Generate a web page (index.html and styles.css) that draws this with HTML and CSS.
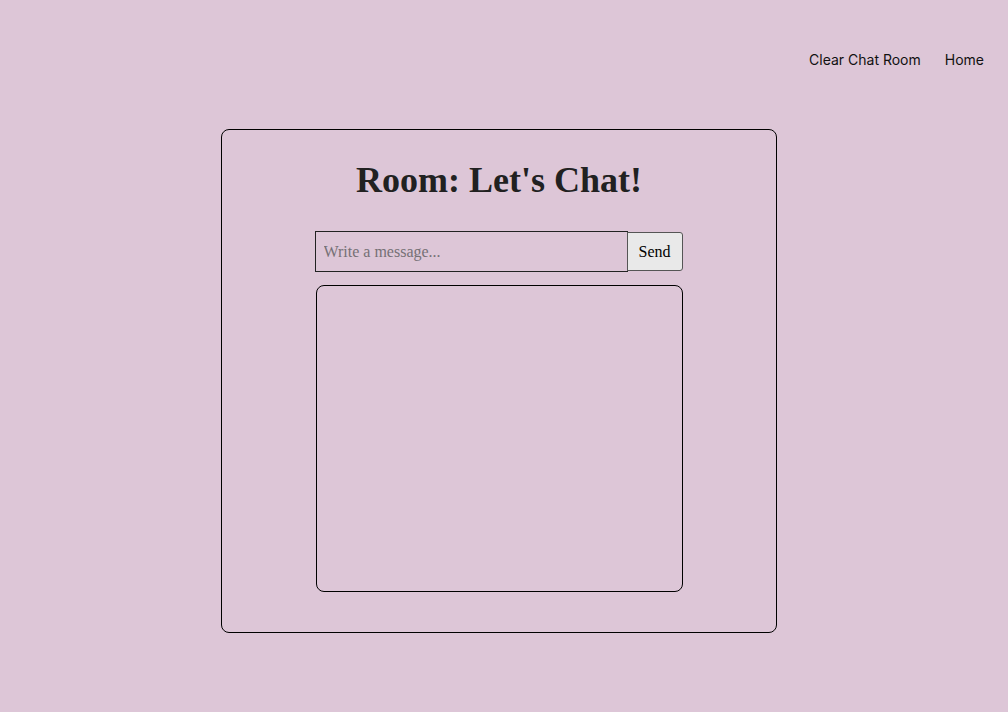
FILE: index.html
```html
<!DOCTYPE html>
<html>
<head>
<meta charset="utf-8">
<link rel="stylesheet" href="styles.css">
</head>
<body>
<nav class="nav">
  <a class="nav-link" href="#">Clear Chat Room</a>
  <a class="nav-link" href="#">Home</a>
</nav>
<main class="main">
  <section class="card">
    <h1 class="title">Room: Let's Chat!</h1>
    <form class="composer">
      <input class="msg-input" type="text" placeholder="Write a message...">
      <button class="send-btn" type="button">Send</button>
    </form>
    <div class="messages"></div>
  </section>
</main>
</body>
</html>
```
FILE: styles.css
```css
html, body {
  margin: 0;
  padding: 0;
  background: #ddc6d7;
  height: 100%;
}
body {
  font-family: "Liberation Serif", serif;
  color: #212121;
}
.nav {
  display: flex;
  justify-content: flex-end;
  gap: 24px;
  padding: 51px 24px 0 0;
  height: 78px;
  box-sizing: border-box;
}
.nav-link {
  font-family: Inter, "Noto Sans", sans-serif;
  font-size: 14px;
  color: #111;
  text-decoration: none;
  line-height: 18px;
}
.main {
  display: flex;
  justify-content: center;
  padding-top: 51px;
  padding-right: 10px;
}
.card {
  width: 556px;
  height: 504px;
  box-sizing: border-box;
  border: 1px solid #000;
  border-radius: 8px;
  display: flex;
  flex-direction: column;
  align-items: center;
}
.title {
  margin: 28px 0 0;
  font-size: 36px;
  font-weight: bold;
  line-height: 44px;
}
.composer {
  display: flex;
  margin: 29px 0 0;
  width: 369px;
}
.msg-input {
  width: 313px;
  height: 41px;
  box-sizing: border-box;
  border: 1px solid #222;
  background: transparent;
  padding: 0 8px;
  font-family: "Liberation Serif", serif;
  font-size: 16px;
  color: #222;
  outline: none;
}
.msg-input::placeholder {
  color: #757075;
}
.send-btn {
  width: 56px;
  height: 39px;
  margin-top: 1px;
  margin-left: -1px;
  box-sizing: border-box;
  border: 1px solid #555;
  border-radius: 0 3px 3px 0;
  background: #e9e9e9;
  font-family: "Liberation Serif", serif;
  font-size: 16px;
  color: #000;
  padding: 0;
}
.messages {
  margin-top: 13px;
  margin-left: 1px;
  width: 367px;
  height: 307px;
  box-sizing: border-box;
  border: 1px solid #000;
  border-radius: 8px;
}
```
